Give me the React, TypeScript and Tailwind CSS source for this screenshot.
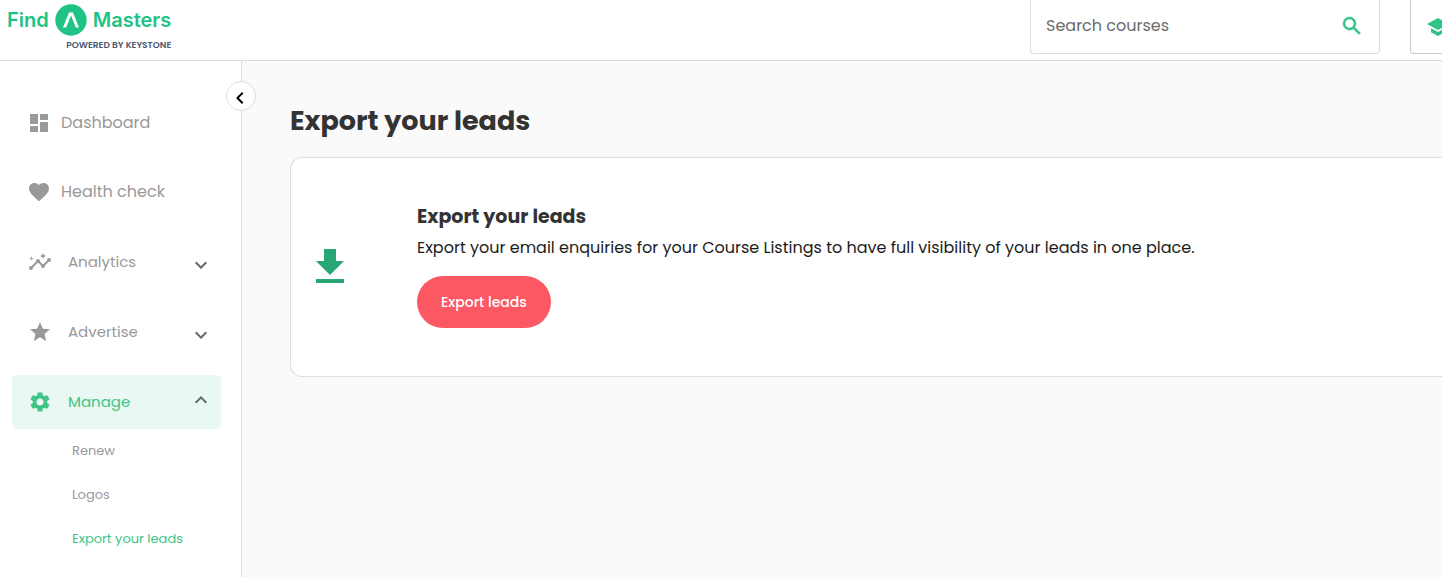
import type { ReactNode } from "react";
import type { IconType } from "react-icons";
import {
  MdChevronLeft,
  MdDashboard,
  MdDownload,
  MdExpandLess,
  MdExpandMore,
  MdFavorite,
  MdInsights,
  MdSchool,
  MdSearch,
  MdSettings,
  MdStar,
} from "react-icons/md";

function Logo() {
  return (
    <a href="#" aria-label="Find A Masters" className="flex flex-col items-end text-[#1fc386]">
      <span className="flex items-center gap-1.5 font-['Inter',sans-serif] text-[20px] leading-8 font-semibold">
        Find
        <svg viewBox="0 0 32 32" className="size-8" aria-hidden="true">
          <circle cx="16" cy="16" r="15.7" fill="currentColor" />
          <path d="M8 23.4 14 8.4h4L24 23.4h-3.2L16 11.6 11.2 23.4Z" fill="#fff" />
        </svg>
        Masters
      </span>
      <span className="mt-[3px] text-[9px] leading-3 font-semibold text-[#4c5670]">POWERED BY KEYSTONE</span>
    </a>
  );
}

function Header() {
  return (
    <header className="flex h-[61px] items-start justify-between border-b border-[#dcdce0] bg-white pl-[7px]">
      <div className="pt-1">
        <Logo />
      </div>
      <div className="flex gap-[30px]">
        <form className="flex h-[54px] w-[350px] items-center rounded-b border border-t-0 border-[#dcdce0] pr-[15px] pb-0.5 pl-[15px]">
          <input
            type="text"
            aria-label="Search courses"
            placeholder="Search courses"
            className="min-w-0 flex-1 text-base text-[#333] outline-none placeholder:text-[#6b6b6b]"
          />
          <button type="button" aria-label="Search" className="text-[#2fc486]">
            <MdSearch className="size-6 [&_path:last-child]:stroke-current [&_path:last-child]:stroke-[0.5px]" />
          </button>
        </form>
        <button
          type="button"
          aria-label="Courses"
          className="flex h-[54px] w-8 items-center overflow-hidden rounded-bl border border-t-0 border-r-0 border-[#c8c8cc] pl-[15px] text-[#2fc486]"
        >
          <MdSchool className="size-6 shrink-0" />
        </button>
      </div>
    </header>
  );
}

function NavLink({ icon: Icon, children }: { icon: IconType; children: ReactNode }) {
  return (
    <a href="#" className="flex h-[54px] items-center gap-2.5 pl-[15px] text-base text-[#999]">
      <Icon className="size-6" />
      {children}
    </a>
  );
}

function NavGroup({ icon: Icon, open = false, children }: { icon: IconType; open?: boolean; children: ReactNode }) {
  const Chevron = open ? MdExpandLess : MdExpandMore;
  return (
    <button
      type="button"
      aria-expanded={open}
      className={`flex h-[54px] w-full items-center gap-4 rounded-[5px] pr-2 pl-4 text-[15px] ${
        open ? "bg-[#e9f8f2] text-[#3ec487]" : "text-[#999]"
      }`}
    >
      <Icon className="size-6" />
      <span className="flex-1 text-left">{children}</span>
      <Chevron className={open ? "mb-1 size-6 text-[#666]" : "mt-1.5 size-6 text-[#666]"} />
    </button>
  );
}

function Sidebar() {
  return (
    <aside className="relative w-[242px] shrink-0 border-r border-[#dcdcdc] bg-white">
      <button
        type="button"
        aria-label="Collapse menu"
        className="absolute top-5 -right-[15px] flex size-[30px] items-center justify-center rounded-full border border-[#dcdcdc] bg-white pt-1 pr-0.5 text-black"
      >
        <MdChevronLeft className="size-6 shrink-0" />
      </button>
      <nav className="flex flex-col gap-4 pt-[35px] pr-5 pl-3">
        <div className="flex flex-col gap-[15px]">
          <NavLink icon={MdDashboard}>Dashboard</NavLink>
          <NavLink icon={MdFavorite}>Health check</NavLink>
        </div>
        <NavGroup icon={MdInsights}>Analytics</NavGroup>
        <NavGroup icon={MdStar}>Advertise</NavGroup>
        <div>
          <NavGroup icon={MdSettings} open>
            Manage
          </NavGroup>
          <ul className="text-[13px] leading-[44px] text-[#999]">
            <li><a href="#" className="block pl-[60px]">Renew</a></li>
            <li><a href="#" className="block pl-[60px]">Logos</a></li>
            <li><a href="#" aria-current="page" className="block pl-[60px] text-[#3ec487]">Export your leads</a></li>
          </ul>
        </div>
      </nav>
    </aside>
  );
}

export default function App() {
  return (
    <div className="flex min-h-screen flex-col overflow-hidden bg-[#fafafa] font-['Poppins','Inter',sans-serif]">
      <Header />
      <div className="flex flex-1">
        <Sidebar />
        <main className="min-w-0 flex-1 pt-10 pl-12">
          <h1 className="text-[27px] leading-10 font-bold text-[#333]">Export your leads</h1>
          <section className="mt-4 flex h-[220px] items-center gap-[63px] rounded-l-xl border border-r-0 border-[#dedede] bg-white pl-[15px]">
            <MdDownload className="size-12 shrink-0 text-[#2aa574]" />
            <div className="pb-[5px]">
              <h2 className="text-[19px] leading-8 font-bold text-[#333]">Export your leads</h2>
              <p className="text-base leading-[30px] text-[#1c1c1c]">
                Export your email enquiries for your Course Listings to have full visibility of your leads in one place.
              </p>
              <button
                type="button"
                className="mt-[13px] h-[52px] rounded-full bg-[#fc5863] px-6 text-sm font-medium text-white"
              >
                Export leads
              </button>
            </div>
          </section>
        </main>
      </div>
    </div>
  );
}
